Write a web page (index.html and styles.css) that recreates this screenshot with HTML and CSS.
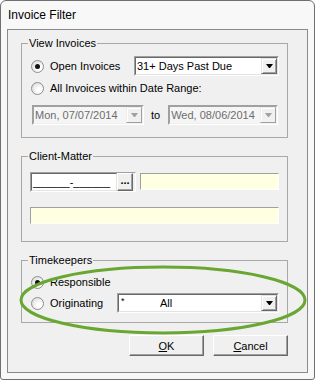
FILE: index.html
```html
<!DOCTYPE html>
<html lang="en">
<head>
    <meta charset="UTF-8">
    <title>Invoice Filter</title>
    <link rel="stylesheet" href="styles.css">
</head>
<body>
    <div class="window">
        <div class="titlebar">Invoice Filter</div>
        <div class="client">
            <fieldset class="group group-invoices">
                <legend>View Invoices</legend>
                <div class="row row-open">
                    <label class="option"><span class="radio checked"></span>Open Invoices</label>
                    <div class="combo combo-days">
                        <div class="combo-field">
                            <span class="combo-text">31+ Days Past Due</span>
                            <span class="drop"></span>
                        </div>
                    </div>
                </div>
                <div class="row row-range">
                    <label class="option"><span class="radio"></span>All Invoices within Date Range:</label>
                </div>
                <div class="row row-dates">
                    <div class="combo date date-from disabled">
                        <div class="combo-field">
                            <span class="combo-text">Mon, 07/07/2014</span>
                            <span class="drop"></span>
                        </div>
                    </div>
                    <span class="to">to</span>
                    <div class="combo date date-to disabled">
                        <div class="combo-field">
                            <span class="combo-text">Wed, 08/06/2014</span>
                            <span class="drop"></span>
                        </div>
                    </div>
                </div>
            </fieldset>

            <fieldset class="group group-client">
                <legend>Client-Matter</legend>
                <div class="row cm-row">
                    <div class="cm-input">
                        <span class="cm-field">______-______</span>
                        <span class="cm-btn">...</span>
                    </div>
                    <div class="memo memo-name"></div>
                </div>
                <div class="memo memo-desc"></div>
            </fieldset>

            <fieldset class="group group-keepers">
                <legend>Timekeepers</legend>
                <div class="row row-resp">
                    <label class="option"><span class="radio checked"></span>Responsible</label>
                </div>
                <div class="row row-orig">
                    <label class="option"><span class="radio"></span>Originating</label>
                    <div class="combo combo-keeper">
                        <div class="combo-field">
                            <span class="combo-text"><span class="star">*</span>All</span>
                            <span class="drop"></span>
                        </div>
                    </div>
                </div>
            </fieldset>

            <div class="buttons">
                <button class="btn"><u>O</u>K</button>
                <button class="btn"><u>C</u>ancel</button>
            </div>
        </div>

        <svg class="highlight" width="315" height="380" viewBox="0 0 315 380">
            <ellipse cx="163" cy="300" rx="142" ry="33" fill="none" stroke="#6aa732" stroke-width="3"/>
        </svg>
    </div>
</body>
</html>
```

FILE: styles.css
```css
body {
    margin: 0;
    font-family: "Liberation Sans", Arial, sans-serif;
    font-size: 11px;
    color: #000;
    background: #fff;
}

.window {
    position: relative;
    width: 315px;
    height: 380px;
    box-sizing: border-box;
    border: 1px solid #707070;
    border-radius: 6px 6px 3px 3px;
    background: #f8f8f8;
    padding: 0 6px 6px;
    display: flex;
    flex-direction: column;
}

.titlebar {
    height: 28px;
    line-height: 28px;
    font-size: 12px;
    padding-left: 1px;
}

.client {
    flex: 1;
    border: 1px solid #8a8a8a;
    background: #f0f0f0;
}

/* group boxes */
.group {
    margin: 12px 19px 0 13px;
    padding: 0 8px 0 9px;
    border: 1px solid #a8a8a8;
    min-width: 0;
}

.group legend {
    padding: 0 1px;
    margin-left: -3px;
    line-height: 13px;
    font-size: 11px;
}

.group-invoices {
    margin-top: 7px;
    padding-top: 6px;
    padding-bottom: 12px;
}

.group-client {
    padding-top: 9px;
    padding-bottom: 17px;
}

.group-keepers {
    padding-top: 7px;
    padding-bottom: 9px;
}

.row {
    display: flex;
    align-items: center;
}

.row-open { height: 20px; }
.row-range { height: 16px; margin-top: 4px; }
.row-dates { height: 20px; margin-top: 9px; padding-left: 1px; }
.row-resp { height: 16px; }
.row-orig { height: 20px; margin-top: 3px; }

.option {
    display: flex;
    align-items: center;
    white-space: nowrap;
}

.radio {
    position: relative;
    flex: none;
    width: 13px;
    height: 13px;
    box-sizing: border-box;
    border: 1px solid #8e8e8e;
    border-radius: 50%;
    background: radial-gradient(circle at 65% 65%, #ffffff 20%, #d8d8d8 90%);
    margin-right: 6px;
}

.radio.checked::after {
    content: "";
    position: absolute;
    left: 3px;
    top: 3px;
    width: 5px;
    height: 5px;
    border-radius: 50%;
    background: #111;
}

/* combo boxes */
.combo {
    height: 20px;
    box-sizing: border-box;
    border: 1px solid;
    border-color: #a0a0a0 #fff #fff #a0a0a0;
    flex: none;
}

.combo-field {
    height: 100%;
    box-sizing: border-box;
    border: 1px solid;
    border-color: #696969 #e3e3e3 #e3e3e3 #696969;
    background: #fff;
    display: flex;
    align-items: stretch;
}

.combo-text {
    flex: 1;
    padding-left: 1px;
    line-height: 16px;
    white-space: nowrap;
    overflow: hidden;
}

.drop {
    flex: none;
    width: 16px;
    box-sizing: border-box;
    border: 1px solid;
    border-color: #e3e3e3 #696969 #696969 #e3e3e3;
    box-shadow: inset 1px 1px #fff, inset -1px -1px #a0a0a0;
    background: #f0f0f0;
    display: flex;
    align-items: center;
    justify-content: center;
}

.drop::after {
    content: "";
    width: 1px;
    height: 0;
    border-top: 4px solid #000;
    border-left: 3px solid transparent;
    border-right: 3px solid transparent;
}

.combo-days {
    margin-left: auto;
    width: 145px;
}

.date-from { width: 112px; }
.date-to { width: 110px; }

.disabled .combo-field {
    background: #f5f5f5;
    border-color: #a0a0a0 #f0f0f0 #f0f0f0 #a0a0a0;
    color: #6d6d6d;
}

.disabled .drop {
    border-color: #ececec #a0a0a0 #a0a0a0 #ececec;
    box-shadow: inset 1px 1px #fff;
}

.disabled .drop::after {
    border-top-color: #a0a0a0;
}

.to {
    margin: 0 8px 0 7px;
}

.combo-keeper {
    margin-left: auto;
    width: 162px;
}

.star {
    display: inline-block;
    width: 39px;
    padding-left: 1px;
    font-size: 9px;
    vertical-align: top;
    line-height: 12px;
}

/* client matter */
.cm-row {
    height: 20px;
    margin-left: -1px;
    align-items: flex-start;
}

.cm-input {
    width: 106px;
    height: 20px;
    box-sizing: border-box;
    border: 1px solid;
    border-color: #a0a0a0 #fff #fff #a0a0a0;
    display: flex;
    padding-right: 2px;
}

.cm-field {
    flex: 1;
    border: 1px solid;
    border-color: #696969 #e3e3e3 #e3e3e3 #696969;
    background: #fff;
    padding-left: 1px;
    line-height: 16px;
    overflow: hidden;
    white-space: nowrap;
}

.cm-btn {
    width: 16px;
    flex: none;
    box-sizing: border-box;
    border: 1px solid;
    border-color: #fff #696969 #696969 #fff;
    box-shadow: inset -1px -1px #a0a0a0;
    background: #f0f0f0;
    text-align: center;
    line-height: 12px;
    font-weight: bold;
}

.memo {
    height: 17px;
    box-sizing: border-box;
    border: 1px solid;
    border-color: #a0a0a0 #fff #fff #a0a0a0;
    background: #ffffe1;
}

.memo-name {
    flex: 1;
    margin: 1px 0 0 4px;
}

.memo-desc {
    margin: 15px 0 0 -1px;
}

/* dialog buttons */
.buttons {
    display: flex;
    justify-content: flex-end;
    gap: 9px;
    margin: 12px 19px 0 0;
}

.btn {
    width: 75px;
    height: 21px;
    padding: 0;
    border: 1px solid;
    border-color: #fff #696969 #696969 #fff;
    box-shadow: inset -1px -1px #a0a0a0;
    background: #f0f0f0;
    font: inherit;
    color: #000;
}

.highlight {
    position: absolute;
    left: -1px;
    top: -1px;
    pointer-events: none;
}
```
